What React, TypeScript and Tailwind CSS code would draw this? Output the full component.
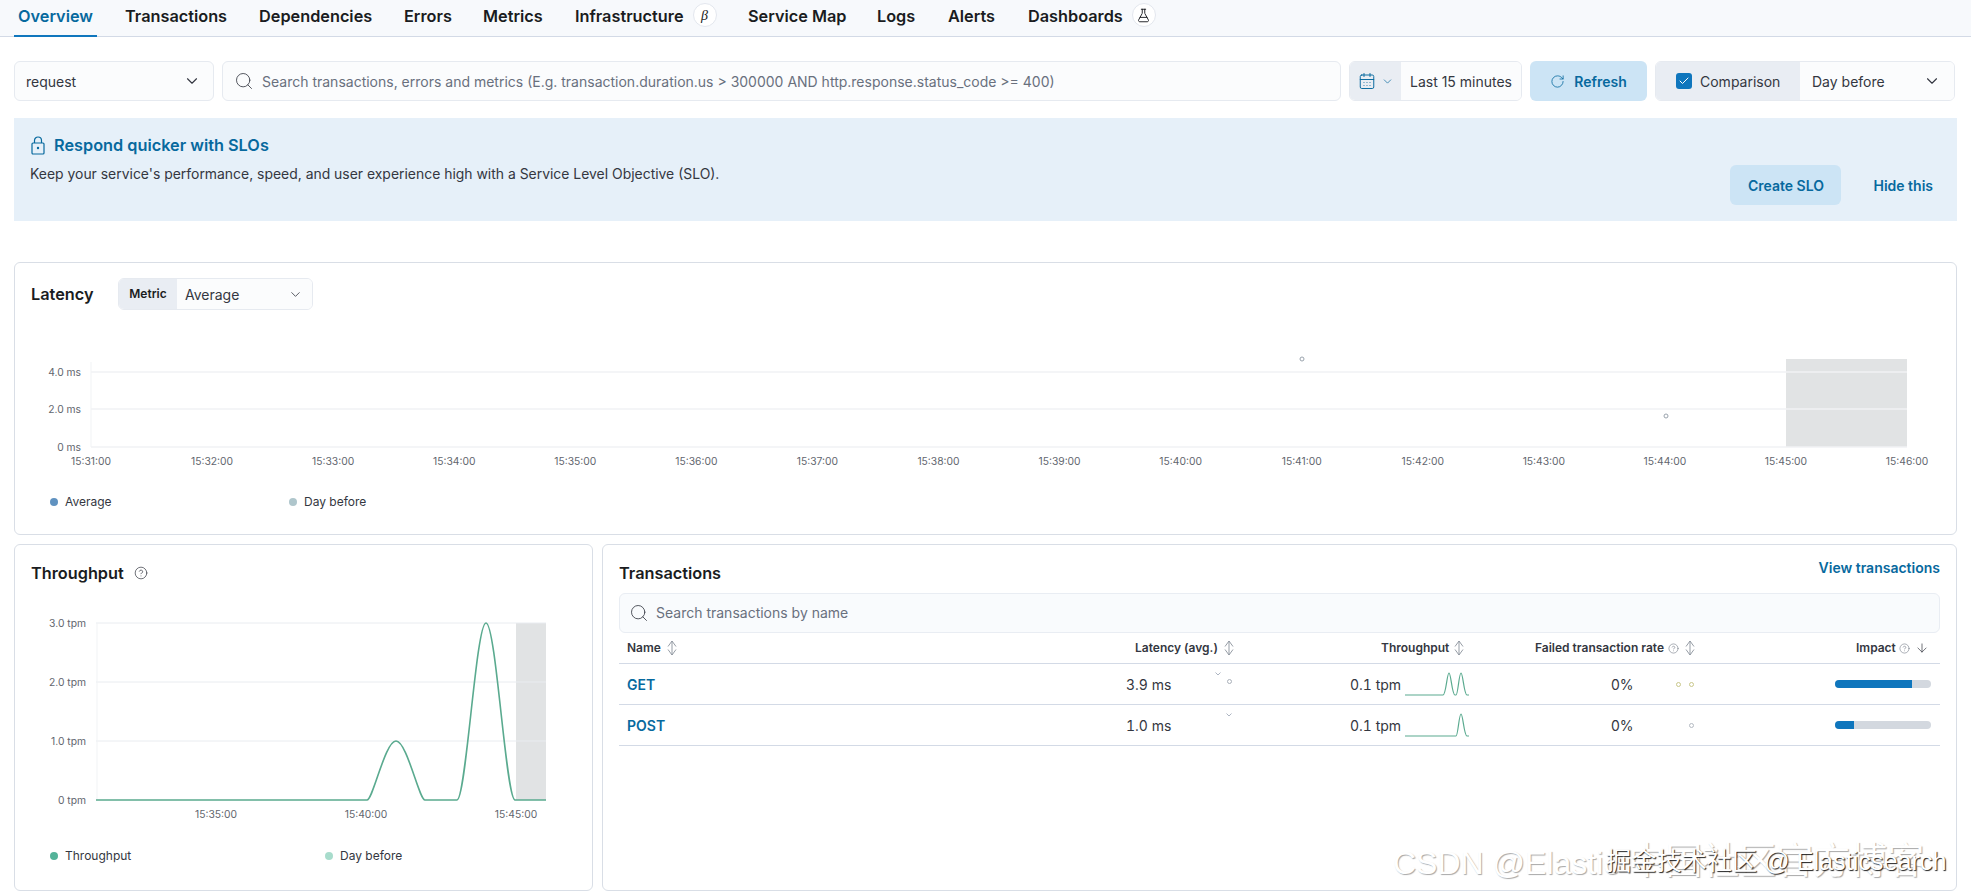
import { ArrowDown, CalendarDays, Check, ChevronDown, CircleHelp, FlaskConical, RotateCw, Search } from "lucide-react"

const tabs = [
  { name: "Transactions", w: "w-[134px]" },
  { name: "Dependencies", w: "w-[145px]" },
  { name: "Errors", w: "w-[79px]" },
  { name: "Metrics", w: "w-[92px]" },
]

const latencyTicks = Array.from({ length: 16 }, (_, i) => ({
  x: 91 + i * 121.07,
  label: `15:${31 + i}:00`,
}))

// chart svgs use page coordinates through their viewBox
function LatencyChart() {
  return (
    <svg viewBox="15 325 1940 150" width="1940" height="150" className="block" style={{ fontFamily: "Inter, sans-serif" }}>
      <rect x="1786" y="358" width="121" height="88" fill="#e1e3e4" />
      {[371, 408, 446].map((y) => (
        <line key={y} x1="91" x2="1907" y1={y} y2={y} stroke="#f0f2f4" strokeWidth="1.5" />
      ))}
      <line x1="91" x2="91" y1="361" y2="446" stroke="#f1f3f5" />
      {[
        ["4.0 ms", 371],
        ["2.0 ms", 408],
        ["0 ms", 446],
      ].map(([t, y]) => (
        <text key={t} x="81" y={Number(y) + 4} textAnchor="end" fontSize="10.3" fill="#62666e">{t}</text>
      ))}
      {latencyTicks.map((t) => (
        <text key={t.label} x={t.x} y="464" textAnchor="middle" fontSize="10.3" fill="#62666e">{t.label}</text>
      ))}
      <circle cx="1302" cy="358" r="2" fill="#fff" stroke="#9aa3ad" />
      <circle cx="1666" cy="415" r="2" fill="#fff" stroke="#9aa3ad" />
    </svg>
  )
}

function ThroughputChart() {
  return (
    <svg viewBox="15 610 578 220" width="578" height="220" className="block" style={{ fontFamily: "Inter, sans-serif" }}>
      <rect x="516" y="623" width="30" height="177" fill="#e1e3e4" />
      {[623, 682, 741].map((y) => (
        <line key={y} x1="96" x2="546" y1={y} y2={y} stroke="#e9ecf0" strokeWidth="1" />
      ))}
      <line x1="97" x2="97" y1="623" y2="800" stroke="#f1f3f5" />
      {[
        ["3.0 tpm", 623],
        ["2.0 tpm", 682],
        ["1.0 tpm", 741],
        ["0 tpm", 800],
      ].map(([t, y]) => (
        <text key={t} x="86" y={Number(y) + 4} textAnchor="end" fontSize="10.3" fill="#62666e">{t}</text>
      ))}
      {[
        ["15:35:00", 216],
        ["15:40:00", 366],
        ["15:45:00", 516],
      ].map(([t, x]) => (
        <text key={t} x={x} y="818" textAnchor="middle" fontSize="10.3" fill="#62666e">{t}</text>
      ))}
      <path
        d="M96 800H367C373 800 385 741 396 741C407 741 419 800 425 800H457C466 800 476 623 486 623C496 623 506 800 515 800H546"
        fill="none"
        stroke="#5aaa8f"
        strokeWidth="1.6"
      />
    </svg>
  )
}

function Spark({ double }: { double?: boolean }) {
  return (
    <svg width="64" height="24" viewBox="0 0 64 24" className="block">
      <path
        d={
          double
            ? "M0 23H38C41 23 42 1 44 1C46 1 47 23 50 23H51C53 23 54 1 56 1C58 1 59 23 62 23H64"
            : "M0 23H51C53 23 54 1 56 1C58 1 59 23 62 23H64"
        }
        fill="none"
        stroke="#5aaa8f"
        strokeWidth="1.2"
      />
    </svg>
  )
}

function SortIcon() {
  return (
    <svg width="12" height="16" viewBox="0 0 12 16" fill="none" stroke="#8b929c" strokeWidth="0.9" className="block">
      <path d="M6 1L2 6.5M6 1L10 6.5M6 15L2 9.5M6 15L10 9.5M6 1V15" />
    </svg>
  )
}

function LockIcon() {
  return (
    <svg width="14" height="19" viewBox="0 0 14 19" fill="none" stroke="#07699e" strokeWidth="1.2" className="block">
      <rect x="1" y="7" width="12" height="11" rx="1" />
      <path d="M3.5 7V4.5a3.5 3.5 0 0 1 7 0V7" />
      <circle cx="7" cy="12" r="1.2" fill="#07699e" stroke="none" />
    </svg>
  )
}

function TinyChevron() {
  return (
    <svg width="6" height="4" viewBox="0 0 6 4" fill="none" stroke="#98a2b3" strokeWidth="0.8" className="block">
      <path d="M0.5 0.5L3 3L5.5 0.5" />
    </svg>
  )
}

function Legend({ items }: { items: { label: string; color: string; w: string }[] }) {
  return (
    <div className="flex pl-[35px] text-[12px] leading-[20px] text-[#343741]">
      {items.map((it) => (
        <div key={it.label} className={`flex items-center gap-[7px] ${it.w}`}>
          <span className={`size-[8px] rounded-full ${it.color}`} />
          <span>{it.label}</span>
        </div>
      ))}
    </div>
  )
}

function Row({ name, latency, chevron, bar, double, dots }: { name: string; latency: string; chevron: string; bar: string; double?: boolean; dots: number }) {
  return (
    <div className="relative flex h-[41px] items-center border-b border-[#d3dae6] text-[14px] text-[#343741]">
      <a className="ml-[8px] font-semibold text-[#07699e]">{name}</a>
      <span className="absolute left-[507px] w-[44px] text-right whitespace-nowrap tabular-nums">{latency}</span>
      <span className={`absolute ${chevron}`}>
        <TinyChevron />
      </span>
      {dots === 2 && <span className="absolute left-[608px] top-[15px] size-[5px] rounded-full border border-[#aab1ba]" />}
      <span className="absolute left-[731px] w-[50px] text-right whitespace-nowrap tabular-nums">0.1 tpm</span>
      <div className="absolute left-[786px] top-[8px]">
        <Spark double={double} />
      </div>
      <span className="absolute left-[992px]">0%</span>
      {dots === 2 && <span className="absolute left-[1057px] top-[18px] size-[5px] rounded-full border border-[#c9c78a]" />}
      <span className={`absolute left-[1070px] top-[18px] size-[5px] rounded-full border ${dots === 2 ? "border-[#c9c78a]" : "border-[#b4bac2]"}`} />
      <div className="absolute left-[1216px] h-[8px] w-[96px] overflow-hidden rounded-full bg-[#d3d8df]">
        <div className={`h-full bg-[#0f76bd] ${bar}`} />
      </div>
    </div>
  )
}

export default function App() {
  return (
    <div className="relative h-[896px] w-[1971px] overflow-hidden bg-white font-['Inter',sans-serif] text-[#1a1c21]">
      {/* tabs */}
      <div className="flex h-[37px] items-stretch border-b border-[#d3dae6] bg-[#f7f9fc] pl-[14px] text-[16.3px] font-semibold">
        <div className="mr-[28px] flex h-[37px] w-[83px] items-center justify-center border-b-2 border-[#0f76bd] pb-[3px] text-[#07699e]">Overview</div>
        {tabs.map((t) => (
          <div key={t.name} className={`flex items-center whitespace-nowrap pb-[3px] ${t.w}`}>{t.name}</div>
        ))}
        <div className="flex w-[173px] items-center pb-[3px]">
          <span>Infrastructure</span>
          <span className="mb-[3px] ml-[9px] flex size-[24px] items-center justify-center rounded-full border border-[#e3e7ee] bg-white font-['Liberation_Serif',serif] text-[14px] font-normal italic">β</span>
        </div>
        <div className="flex w-[129px] items-center pb-[3px]">Service Map</div>
        <div className="flex w-[71px] items-center pb-[3px]">Logs</div>
        <div className="flex w-[80px] items-center pb-[3px]">Alerts</div>
        <div className="flex items-center pb-[3px]">
          <span>Dashboards</span>
          <span className="mb-[3px] ml-[9px] flex size-[24px] items-center justify-center rounded-full border border-[#e3e7ee] bg-white">
            <FlaskConical className="size-[15px]" strokeWidth={1.5} />
          </span>
        </div>
      </div>

      {/* filter row */}
      <div className="mt-[24px] flex h-[40px] items-stretch gap-[8px] px-[14px] text-[14px] text-[#343741]">
        <div className="flex w-[200px] items-center justify-between rounded-md border border-[#e6eaf0] bg-[#fbfcfd] pl-[11px] pr-[12px]">
          <span>request</span>
          <ChevronDown className="size-[18px]" strokeWidth={1.5} />
        </div>
        <div className="flex w-[1119px] items-center gap-[8px] rounded-md border border-[#e6eaf0] bg-[#fbfcfd] pl-[11px] text-[#69707d]">
          <Search className="size-[20px] text-[#343741]" strokeWidth={1} />
          <span className="whitespace-nowrap">Search transactions, errors and metrics (E.g. transaction.duration.us &gt; 300000 AND http.response.status_code &gt;= 400)</span>
        </div>
        <div className="flex w-[173px] overflow-hidden rounded-md border border-[#e6eaf0]">
          <div className="flex w-[51px] items-center justify-center gap-[5px] bg-[#e9edf3]">
            <CalendarDays className="size-[18px] text-[#07699e]" strokeWidth={1.3} />
            <ChevronDown className="size-[13px] text-[#07699e]" strokeWidth={1.3} />
          </div>
          <div className="flex flex-1 items-center justify-center bg-[#fbfcfd] whitespace-nowrap">Last 15 minutes</div>
        </div>
        <div className="flex w-[117px] items-center justify-center gap-[9px] rounded-md bg-[#cce4f5] font-semibold text-[#07699e]">
          <RotateCw className="size-[15px]" strokeWidth={1.3} />
          <span>Refresh</span>
        </div>
        <div className="flex w-[300px] overflow-hidden rounded-md border border-[#e6eaf0]">
          <div className="flex w-[144px] items-center gap-[8px] bg-[#e9edf3] pl-[20px]">
            <span className="flex size-[16px] items-center justify-center rounded-[3px] bg-[#0f76bd]">
              <Check className="size-[12px] text-white" strokeWidth={2} />
            </span>
            <span>Comparison</span>
          </div>
          <div className="flex flex-1 items-center justify-between bg-[#fbfcfd] pl-[12px] pr-[13px]">
            <span>Day before</span>
            <ChevronDown className="size-[18px]" strokeWidth={1.5} />
          </div>
        </div>
      </div>

      {/* callout */}
      <div className="mx-[14px] mt-[17px] flex h-[103px] justify-between bg-[#e6f0f9] pl-[16px] pr-[24px]">
        <div className="pt-[17px]">
          <div className="flex h-[20px] items-center gap-[9px] text-[16.3px] font-semibold text-[#07699e]">
            <span className="ml-[1px]">
              <LockIcon />
            </span>
            <span>Respond quicker with SLOs</span>
          </div>
          <p className="mt-[9px] text-[13.93px] leading-[20px] text-[#343741]">
            Keep your service's performance, speed, and user experience high with a Service Level Objective (SLO).
          </p>
        </div>
        <div className="flex items-start gap-[32px] pt-[47px] text-[14px] font-semibold text-[#07699e]">
          <div className="flex h-[40px] w-[111px] items-center justify-center rounded-md bg-[#cce4f5]">Create SLO</div>
          <div className="flex h-[40px] items-center">Hide this</div>
        </div>
      </div>

      {/* latency */}
      <div className="mx-[14px] mt-[41px] h-[273px] rounded-md border border-[#d9dee6] bg-white">
        <div className="flex items-center pl-[16px] pt-[15px]">
          <h2 className="w-[87px] text-[16.3px] font-semibold">Latency</h2>
          <div className="flex h-[32px] w-[195px] overflow-hidden rounded-md border border-[#e6eaf0] text-[14px]">
            <div className="flex w-[58px] items-center justify-center bg-[#e9edf3] text-[12px] font-semibold">Metric</div>
            <div className="flex flex-1 items-center justify-between bg-[#fbfcfd] pl-[8px] pr-[9px] text-[#343741]">
              <span>Average</span>
              <ChevronDown className="size-[15px]" strokeWidth={1.3} />
            </div>
          </div>
        </div>
        <div className="mt-[16px]">
          <LatencyChart />
        </div>
        <div className="mt-[16px]">
          <Legend
            items={[
              { label: "Average", color: "bg-[#6092c0]", w: "w-[239px]" },
              { label: "Day before", color: "bg-[#afc6cc]", w: "w-[120px]" },
            ]}
          />
        </div>
      </div>

      {/* bottom row */}
      <div className="mx-[14px] mt-[9px] flex h-[347px] gap-[9px]">
        <div className="h-full w-[579px] rounded-md border border-[#d9dee6]">
          <div className="flex h-[65px] items-start gap-[10px] pl-[16px] pt-[18px]">
            <h2 className="text-[16.3px] leading-[20px] font-semibold">Throughput</h2>
            <CircleHelp className="mt-[3px] size-[14px] text-[#343741]" strokeWidth={1.2} />
          </div>
          <ThroughputChart />
          <div className="mt-[16px]">
            <Legend
              items={[
                { label: "Throughput", color: "bg-[#54b399]", w: "w-[275px]" },
                { label: "Day before", color: "bg-[#a8dccc]", w: "w-[120px]" },
              ]}
            />
          </div>
        </div>

        <div className="h-full flex-1 rounded-md border border-[#d9dee6] px-[16px]">
          <div className="flex h-[48px] justify-between">
            <h2 className="pt-[18px] text-[16.3px] leading-[20px] font-semibold">Transactions</h2>
            <a className="pt-[13px] text-[14px] leading-[20px] font-semibold text-[#07699e]">View transactions</a>
          </div>
          <div className="flex h-[40px] items-center gap-[7px] rounded-md border border-[#e9edf3] bg-[#f9fbfd] pb-[1px] pl-[9px] text-[14px] text-[#69707d]">
            <Search className="size-[20px] text-[#343741]" strokeWidth={1} />
            <span>Search transactions by name</span>
          </div>
          {/* header */}
          <div className="relative flex h-[31px] items-center border-b border-[#d3dae6] text-[12px] font-semibold text-[#343741]">
            <span className="absolute left-[8px]">Name</span>
            <span className="absolute left-[47px]"><SortIcon /></span>
            <span className="absolute left-[516px]">Latency (avg.)</span>
            <span className="absolute left-[604px]"><SortIcon /></span>
            <span className="absolute left-[762px]">Throughput</span>
            <span className="absolute left-[834px]"><SortIcon /></span>
            <span className="absolute left-[916px]">Failed transaction rate</span>
            <CircleHelp className="absolute left-[1049px] size-[11px] text-[#69707d]" strokeWidth={1.2} />
            <span className="absolute left-[1065px]"><SortIcon /></span>
            <span className="absolute left-[1237px]">Impact</span>
            <CircleHelp className="absolute left-[1280px] size-[11px] text-[#69707d]" strokeWidth={1.2} />
            <ArrowDown className="absolute left-[1296px] size-[14px] text-[#343741]" strokeWidth={1.2} />
          </div>
          <Row name="GET" latency="3.9 ms" chevron="left-[596px] top-[8px]" bar="w-[80%]" double dots={2} />
          <Row name="POST" latency="1.0 ms" chevron="left-[607px] top-[8px]" bar="w-[20%]" dots={1} />
        </div>
      </div>

      {/* image watermarks */}
      <span className="absolute left-[1393px] top-[843px] whitespace-nowrap font-['Liberation_Sans','Noto_Sans_CJK_SC',sans-serif] text-[32px] leading-[38px] text-white [text-shadow:1px_1px_1px_#a8a8a8]">
        CSDN @Elastic <span className="text-[37px]">中国社区官方博客</span>
      </span>
      <span className="absolute left-[1606px] top-[846px] whitespace-nowrap font-['Liberation_Sans','Noto_Sans_CJK_SC',sans-serif] text-[25.2px] leading-[30px] text-white [text-shadow:1px_1px_1px_#222]">
        掘金技术社区 @ Elasticsearch
      </span>
    </div>
  )
}
